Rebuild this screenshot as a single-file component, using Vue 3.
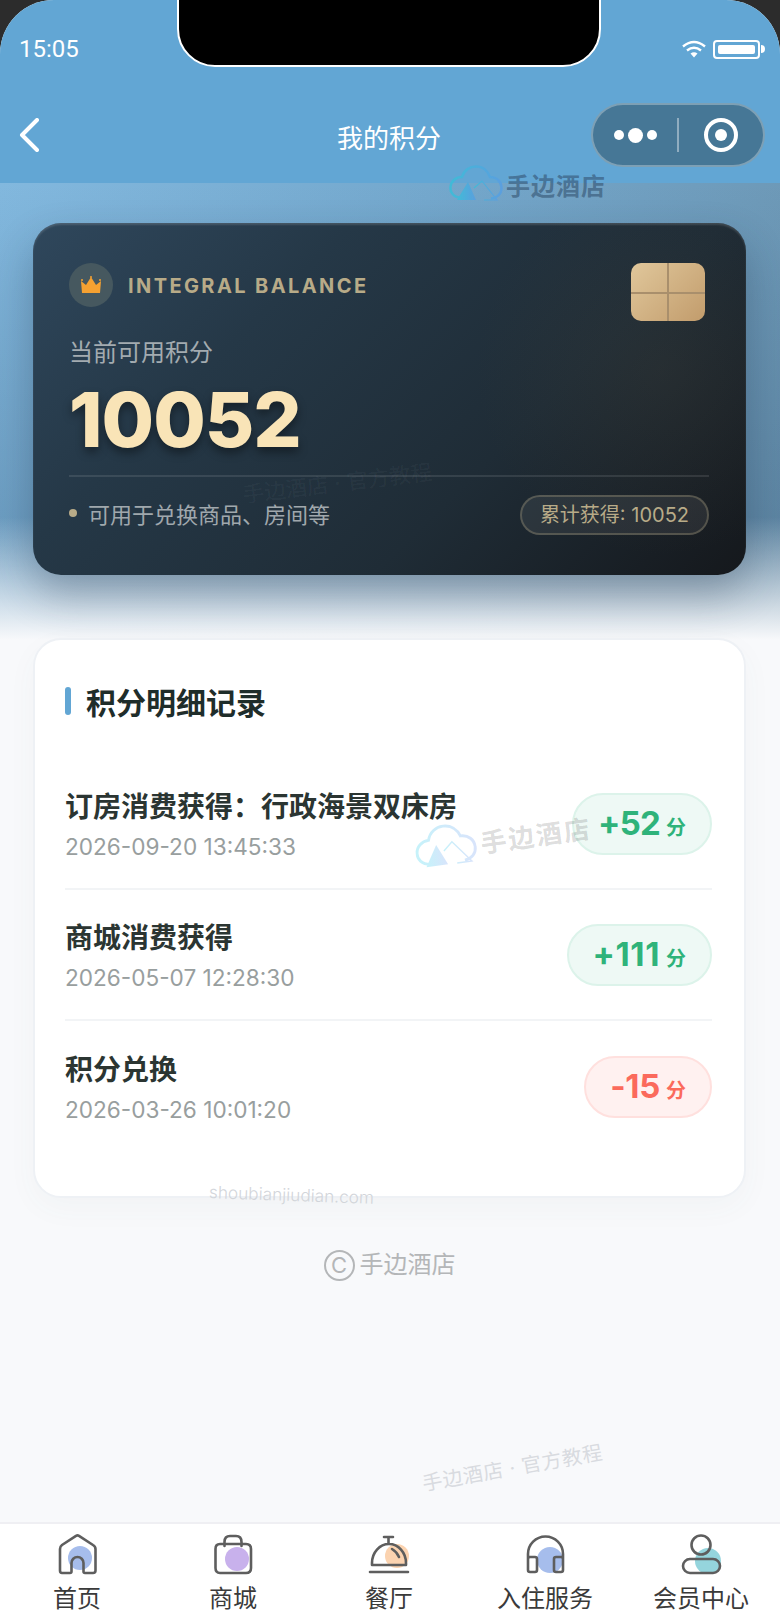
<script setup>
const records = [
  { title: '订房消费获得：行政海景双床房', time: '2026-09-20 13:45:33', amount: '+52', spacing: -0.8, kind: 'plus' },
  { title: '商城消费获得', time: '2026-05-07 12:28:30', amount: '+111', spacing: 0.6, kind: 'plus' },
  { title: '积分兑换', time: '2026-03-26 10:01:20', amount: '-15', spacing: -0.3, kind: 'minus' }
];

const tabs = [
  {
    name: '首页',
    dot: { x: 24, y: 25, r: 12, fill: '#a6bdec' },
    d: 'M4 16Q4 13.5 6 12L20 2.8Q21.5 2 23 2.8L37 12Q39.5 13.5 39.5 16V37.5Q39.5 40 37 40H29Q27.5 40 27.5 38.5V30A6 6 0 0 0 15.5 30V38.5Q15.5 40 14 40H6Q4 40 4 37.5Z'
  },
  {
    name: '商城',
    dot: { x: 25, y: 26, r: 12, fill: '#c8b1ec' },
    d: 'M8 11H34Q39 11 39 16V35Q39 40 34 40H8Q3.5 40 3.5 35V16Q3.5 11 8 11ZM12.5 13V9Q12.5 3 18 3H24Q29.5 3 29.5 9V13'
  },
  {
    name: '餐厅',
    dot: { x: 29, y: 23, r: 12, fill: '#fbd3b0' },
    d: 'M16 4H25M20.5 4V11M4 32V30A17 19 0 0 1 38 30V32ZM2 39H40M24 16Q29 19 31 24'
  },
  {
    name: '入住服务',
    dot: { x: 26, y: 27, r: 13, fill: '#a6bdec' },
    d: 'M4 32V21A17.5 17.5 0 0 1 39 21V32M4 26Q4 24 6 24H11Q13 24 13 26V37Q13 39 11 39H6Q4 39 4 37ZM30 26Q30 24 32 24H37Q39 24 39 26V37Q39 39 37 39H32Q30 39 30 37Z'
  },
  {
    name: '会员中心',
    dot: { x: 28, y: 28, r: 13, fill: '#95d5dd' },
    d: 'M11.5 12A9.5 9.5 0 1 0 30.500 12A9.5 9.5 0 1 0 11.5 12ZM10 26H33A7 7 0 0 1 33 40H10A7 7 0 0 1 10 26Z'
  }
];
</script>

<template>
  <div class="phone">
    <header class="nav">
      <div class="status">
        <span class="clock">15:05</span>
        <div class="status-icons">
          <svg width="24" height="18" viewBox="0 0 24 18" fill="none" stroke="#fff" stroke-width="2.4">
            <path d="M1 6.500Q12 -2.500 23 6.500M5 10.500Q12 5 19 10.500" />
            <path d="M8.500 13.500Q12 11 15.500 13.500L12 17.500Z" fill="#fff" stroke="none" />
          </svg>
          <div class="battery"><i></i></div>
        </div>
      </div>
      <div class="notch"></div>
      <div class="bar">
        <svg class="back" width="20" height="34" viewBox="0 0 20 34" fill="none" stroke="#fff" stroke-width="4" stroke-linecap="round" stroke-linejoin="round">
          <path d="M18 2L3 17L18 32" />
        </svg>
        <h1 class="page-title">我的积分</h1>
        <div class="capsule">
          <div class="dots"><i></i><b></b><i></i></div>
          <span class="capsule-line"></span>
          <svg width="36" height="36" viewBox="0 0 36 36">
            <circle cx="18" cy="18" r="15" fill="none" stroke="#fff" stroke-width="4" />
            <circle cx="18" cy="18" r="6" fill="#fff" />
          </svg>
        </div>
      </div>
    </header>

    <main class="main">
      <section class="balance">
        <div class="balance-top">
          <div class="brand">
            <span class="crown">
              <svg width="20" height="18" viewBox="0 0 20 18" fill="#f5a131">
                <path d="M0 5L5 9L10 1L15 9L20 5L19 17H1Z" />
                <circle cx="1" cy="4" r="1" />
                <circle cx="10" cy="1" r="1" />
                <circle cx="19" cy="4" r="1" />
              </svg>
            </span>
            <span class="brand-text">INTEGRAL BALANCE</span>
          </div>
          <div class="chip"></div>
        </div>
        <p class="balance-label">当前可用积分</p>
        <p class="balance-num">10052</p>
        <div class="balance-foot">
          <span class="hint"><i></i>可用于兑换商品、房间等</span>
          <span class="total">累计获得: 10052</span>
        </div>
      </section>

      <section class="records">
        <h2 class="records-title">积分明细记录</h2>
        <div v-for="item in records" :key="item.time" class="record">
          <div class="record-info">
            <p class="record-name">{{ item.title }}</p>
            <p class="record-time">{{ item.time }}</p>
          </div>
          <div class="amount" :class="item.kind">
            <strong :style="{ letterSpacing: item.spacing + 'px' }">{{ item.amount }}</strong><span>分</span>
          </div>
        </div>
      </section>

      <div class="copyright"><span class="copy-mark">C</span>手边酒店</div>
    </main>

    <nav class="tabbar">
      <div v-for="tab in tabs" :key="tab.name" class="tab">
        <svg width="44" height="44" viewBox="0 0 44 44" fill="none">
          <circle :cx="tab.dot.x" :cy="tab.dot.y" :r="tab.dot.r" :fill="tab.dot.fill" />
          <path :d="tab.d" stroke="#5e5e5e" stroke-width="2.600" stroke-linejoin="round" stroke-linecap="round" />
        </svg>
        <span>{{ tab.name }}</span>
      </div>
    </nav>

    <div class="mark mark-top">
      <svg width="54" height="38" viewBox="0 0 54 38" fill="none">
        <defs>
          <linearGradient id="logo-a" x1="0" y1="0" x2="1" y2="0">
            <stop offset="0" stop-color="#3fbcd8" />
            <stop offset="1" stop-color="#5a9fe0" />
          </linearGradient>
        </defs>
        <path d="M12 33C4 32 1 27 1.500 22C2 16 7 12 13 12C15 5 21 1.500 27 1.500C34 1.500 39 6 41 12C48 12 52.500 17 52.500 23C52.500 29 48 33 42 33.500" stroke="url(#logo-a)" stroke-width="2.500" />
        <path d="M19 17L8 35H27Z" fill="url(#logo-a)" />
        <path d="M25 23L33 16L48 35H35" stroke="url(#logo-a)" stroke-width="1.200" />
      </svg>
      <span>手边酒店</span>
    </div>
    <div class="mark mark-mid">
      <svg width="62" height="44" viewBox="0 0 54 38" fill="none">
        <defs>
          <linearGradient id="logo-b" x1="0" y1="0" x2="1" y2="0">
            <stop offset="0" stop-color="#c6f2fa" />
            <stop offset="1" stop-color="#d8e4fb" />
          </linearGradient>
        </defs>
        <path d="M12 33C4 32 1 27 1.500 22C2 16 7 12 13 12C15 5 21 1.500 27 1.500C34 1.500 39 6 41 12C48 12 52.500 17 52.500 23C52.500 29 48 33 42 33.500" stroke="url(#logo-b)" stroke-width="2.500" />
        <path d="M19 17L8 35H27Z" fill="url(#logo-b)" />
        <path d="M25 23L33 16L48 35H35" stroke="url(#logo-b)" stroke-width="1.200" />
      </svg>
      <span>手边酒店</span>
    </div>
    <div class="mark mark-card">手边酒店 · 官方教程</div>
    <div class="mark mark-url">shoubianjiudian.com</div>
    <div class="mark mark-foot">手边酒店 · 官方教程</div>
  </div>
</template>

<style>
html,
body {
  margin: 0;
  background: #2c2c2c;
}
</style>

<style scoped>
.phone {
  position: relative;
  display: flex;
  flex-direction: column;
  width: 780px;
  height: 1624px;
  overflow: hidden;
  border-radius: 54px 54px 0 0;
  background: #f8f9fb;
  font-family: Inter, "Noto Sans CJK SC", sans-serif;
}

p,
h1,
h2 {
  margin: 0;
}

.nav {
  position: relative;
  flex: none;
  height: 183px;
  background: #62a6d4;
  color: #fff;
}

.status {
  display: flex;
  justify-content: space-between;
  align-items: center;
  height: 20px;
  padding: 39px 20px 0 19px;
}

.clock {
  font-family: Roboto, sans-serif;
  font-size: 24px;
}

.status-icons {
  display: flex;
  align-items: center;
  gap: 7px;
}

.battery {
  position: relative;
  box-sizing: border-box;
  width: 47px;
  height: 19px;
  padding: 3px;
  border: 2px solid #fff;
  border-radius: 4px;
}

.battery i {
  display: block;
  height: 100%;
  border-radius: 2px;
  background: #fff;
}

.battery::after {
  content: "";
  position: absolute;
  top: 3px;
  right: -7px;
  width: 4px;
  height: 8px;
  border-radius: 0 4px 4px 0;
  background: #fff;
}

.notch {
  position: absolute;
  top: -2px;
  left: 177px;
  width: 424px;
  height: 69px;
  box-sizing: border-box;
  border: 2px solid #fff;
  border-radius: 0 0 38px 38px;
  background: #000;
}

.bar {
  position: relative;
  display: flex;
  justify-content: center;
  align-items: center;
  height: 64px;
  margin-top: 44px;
}

.back {
  position: absolute;
  left: 19px;
  top: 15px;
}

.page-title {
  font-size: 26px;
  font-weight: 400;
  line-height: 36px;
  margin: 8px 2px 0 0;
}

.capsule {
  position: absolute;
  right: 15px;
  top: 0;
  display: flex;
  align-items: center;
  box-sizing: border-box;
  width: 174px;
  height: 64px;
  padding-left: 21px;
  border: 2px solid rgba(255, 255, 255, 0.3);
  border-radius: 32px;
  background: #467796;
}

.dots {
  display: flex;
  align-items: center;
  gap: 2px;
}

.dots i {
  width: 10px;
  height: 10px;
  border-radius: 50%;
  background: #fff;
}

.dots b {
  width: 15px;
  height: 15px;
  margin: 0 2px;
  border-radius: 50%;
  background: #fff;
}

.capsule-line {
  width: 2px;
  height: 34px;
  margin: 0 24px 0 20px;
  background: rgba(255, 255, 255, 0.4);
}

.main {
  flex: 1;
  padding: 40px 34px 0 33px;
  background:
    linear-gradient(to bottom, rgba(248, 249, 251, 0) 334px, #f8f9fb 457px) 0 0 / 100% 457px no-repeat,
    linear-gradient(to bottom, rgba(30, 60, 90, 0) 0, rgba(30, 60, 90, 0.2) 334px) 0 0 / 100% 457px no-repeat,
    linear-gradient(100deg, #82b8de 0%, #74a8cd 50%, #6c96b3 100%) 0 0 / 100% 457px no-repeat;
}

.balance {
  box-sizing: border-box;
  height: 352px;
  padding: 40px 37px 0 36px;
  border-radius: 28px;
  background:
    radial-gradient(circle at 88% 42%, rgba(90, 80, 60, 0.16), rgba(90, 80, 60, 0) 28%),
    linear-gradient(135deg, #2f475c 0%, #253847 30%, #1f2c36 65%, #15181c 100%);
  box-shadow: 0 20px 40px rgba(30, 50, 70, 0.32), inset 0 2px 2px rgba(255, 255, 255, 0.14);
}

.balance-top {
  display: flex;
  justify-content: space-between;
}

.brand {
  display: flex;
  align-items: center;
  gap: 15px;
  height: 44px;
}

.crown {
  display: flex;
  justify-content: center;
  align-items: center;
  width: 44px;
  height: 44px;
  border-radius: 50%;
  background: #46585f;
}

.brand-text {
  margin-top: 2px;
  color: #b8ab88;
  font-size: 20px;
  font-weight: 700;
  letter-spacing: 2.400px;
}

.chip {
  position: relative;
  width: 74px;
  height: 58px;
  margin-right: 4px;
  border-radius: 10px;
  background:
    linear-gradient(#a98f6c, #a98f6c) 50% 0 / 2px 100% no-repeat,
    linear-gradient(#a98f6c, #a98f6c) 0 52% / 100% 2px no-repeat,
    linear-gradient(135deg, #e0c79b, #c29c6c);
}

.balance-label {
  margin-top: 14px;
  color: #a3abb0;
  font-size: 24px;
  line-height: 36px;
}

.balance-num {
  margin-top: 6px;
  color: #f9e4b7;
  font-size: 76px;
  font-weight: 800;
  line-height: 84px;
  letter-spacing: -1px;
  text-shadow: 0 5px 10px rgba(0, 0, 0, 0.4);
}

.balance-foot {
  display: flex;
  justify-content: space-between;
  align-items: center;
  margin-top: 14px;
  padding-top: 18px;
  border-top: 2px solid rgba(255, 255, 255, 0.1);
}

.hint {
  display: flex;
  align-items: center;
  padding-bottom: 4px;
  color: #a0a8ad;
  font-size: 22px;
}

.hint i {
  width: 8px;
  height: 8px;
  margin-right: 11px;
  border-radius: 50%;
  background: #b8ab88;
}

.total {
  box-sizing: border-box;
  height: 40px;
  padding: 0 18px;
  border: 2px solid rgba(184, 171, 136, 0.3);
  border-radius: 20px;
  background: rgba(255, 255, 255, 0.07);
  color: #b8ab88;
  font-size: 20px;
  line-height: 37px;
}

.records {
  box-sizing: border-box;
  height: 560px;
  margin-top: 63px;
  padding: 46px 32px 0 30px;
  border: 2px solid #eef1f5;
  border-radius: 28px;
  background: #fff;
  box-shadow: 0 10px 30px rgba(80, 90, 110, 0.04);
}

.records-title {
  display: flex;
  align-items: center;
  gap: 15px;
  height: 30px;
  color: #1f2d2a;
  font-size: 30px;
  font-weight: 700;
  margin-bottom: 43px;
}

.records-title::before {
  content: "";
  width: 6px;
  height: 28px;
  border-radius: 3px;
  background: #62a6d4;
}

.record {
  display: flex;
  justify-content: space-between;
  align-items: center;
  box-sizing: border-box;
  height: 131px;
  border-bottom: 2px solid #f2f4f6;
}

.record:last-child {
  border-bottom: 0;
}

.record-name {
  color: #2b3532;
  font-size: 28px;
  font-weight: 600;
  line-height: 40px;
}

.record-time {
  margin-top: 6px;
  color: #989e9e;
  font-size: 22.600px;
  line-height: 28px;
}

.amount {
  display: flex;
  align-items: baseline;
  box-sizing: border-box;
  height: 62px;
  padding: 0 24px;
  border: 2px solid;
  border-radius: 31px;
  line-height: 57px;
}

.amount strong {
  font-size: 33px;
  font-weight: 700;
}

.amount span {
  margin-left: 6px;
  font-size: 20px;
  font-weight: 600;
}

.plus {
  border-color: #dcf3ea;
  background: #eef9f5;
  color: #2fb37a;
}

.minus {
  border-color: #ffe0de;
  background: #fff1f0;
  color: #fb6a5c;
}

.copyright {
  display: flex;
  justify-content: center;
  align-items: center;
  gap: 5px;
  margin-top: 51px;
  color: #b4b6b8;
  font-size: 24px;
  line-height: 32px;
}

.copy-mark {
  box-sizing: border-box;
  width: 31px;
  height: 31px;
  border: 2px solid #b4b6b8;
  border-radius: 50%;
  font-size: 22px;
  line-height: 27px;
  text-align: center;
}

.tabbar {
  flex: none;
  display: grid;
  grid-template-columns: repeat(5, 156px);
  height: 100px;
  border-top: 2px solid #efeff3;
  background: #fff;
}

.tab {
  display: flex;
  flex-direction: column;
  align-items: center;
  padding-top: 9px;
  color: #3a3a3a;
  font-size: 24px;
  line-height: 34px;
}

.tab svg {
  margin-bottom: 5px;
}

.tab span {
  margin-right: 2px;
}

.mark {
  position: absolute;
  pointer-events: none;
  white-space: nowrap;
}

.mark-top {
  top: 165px;
  left: 449px;
  display: flex;
  align-items: center;
  gap: 3px;
  color: rgba(50, 80, 110, 0.62);
  font-size: 24px;
  font-weight: 700;
  letter-spacing: 1px;
  opacity: 0.95;
}

.mark-mid {
  top: 816px;
  left: 414px;
  display: flex;
  align-items: center;
  gap: 4px;
  color: rgba(0, 0, 0, 0.15);
  font-size: 26px;
  font-weight: 600;
  letter-spacing: 2px;
  transform: rotate(-8deg);
}

.mark-card {
  top: 466px;
  left: 242px;
  color: rgba(255, 255, 255, 0.05);
  font-size: 21.500px;
  transform: rotate(-7deg);
}

.mark-url {
  top: 1184px;
  left: 209px;
  color: #d2d5da;
  font-size: 17.200px;
  font-weight: 300;
  transform: rotate(2deg);
}

.mark-foot {
  top: 1452px;
  left: 421px;
  color: #d8dbe0;
  font-size: 20px;
  letter-spacing: 0.500px;
  transform: rotate(-10deg);
}
</style>
